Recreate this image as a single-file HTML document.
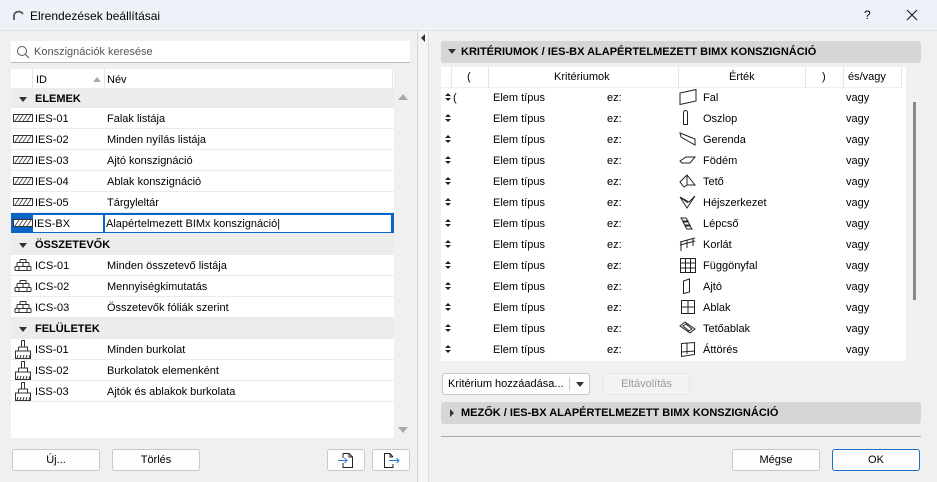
<!DOCTYPE html><html><head><meta charset="utf-8"><style>
*{box-sizing:border-box;margin:0;padding:0}
body{width:937px;height:482px;overflow:hidden;background:#f0f0f0;font-family:"Liberation Sans",sans-serif;font-size:11px;color:#000;position:relative}
.a{position:absolute}
.title{left:0;top:0;width:937px;height:31px;background:#eef2f8;border-bottom:1px solid #e0e3e8}
.row{position:absolute;left:11px;width:383px;height:21px;background:#fff;border-bottom:1px solid #ececec}
.grp{position:absolute;left:11px;width:383px;height:21px;background:#ececec;font-weight:bold}
.id{position:absolute;left:24px;top:5px}
.nm{position:absolute;left:96px;top:5px}
.btn{position:absolute;height:22px;background:#fdfdfd;border:1px solid #c8c8c8;border-radius:3px;text-align:center;line-height:20px}
.r{position:absolute;left:441px;width:465px;height:21px}
.r span{position:absolute;top:5px}
.r i{position:absolute;left:4px;top:6px;width:0;height:0;border-left:3px solid transparent;border-right:3px solid transparent;border-bottom:3px solid #222}
.r b{position:absolute;left:4px;top:11px;width:0;height:0;border-left:3px solid transparent;border-right:3px solid transparent;border-top:3px solid #222}
.ic{position:absolute;left:238px;top:2px}
</style></head><body>
<div class="a title"></div>
<svg class="a" style="left:11px;top:8px" width="14" height="14"><path d="M3 12 V7 A5 5 0 0 1 12 6" fill="none" stroke="#555" stroke-width="1.8"/></svg>
<div class="a" style="left:30px;top:9px;font-size:12px">Elrendezések beállításai</div>
<div class="a" style="left:864px;top:8px;font-size:12px">?</div>
<svg class="a" style="left:906px;top:9px" width="12" height="12"><path d="M1 1L11 11M11 1L1 11" stroke="#222" stroke-width="1.2"/></svg>
<div class="a" style="left:0;top:31px;width:418px;height:451px;border-right:1px solid #d8d8d8;background:#f0f0f0"></div>
<div class="a" style="left:419px;top:31px;width:10px;height:451px;background:#f5f5f5;border-right:1px solid #e0e0e0"></div>
<div class="a" style="left:421px;top:34px;width:0;height:0;border-top:4px solid transparent;border-bottom:4px solid transparent;border-right:4px solid #333"></div>
<div class="a" style="left:11px;top:41px;width:399px;height:22px;background:#fff;border-bottom:1px solid #bbb"></div>
<svg class="a" style="left:16px;top:45px" width="14" height="14"><circle cx="6" cy="6" r="4.5" fill="none" stroke="#555"/><path d="M9.5 9.5L13 13" stroke="#555"/></svg>
<div class="a" style="left:34px;top:46px;color:#555">Konszignációk keresése</div>
<div class="a" style="left:11px;top:69px;width:383px;height:369px;background:#fff"></div>
<div class="a" style="left:32px;top:69px;width:1px;height:19px;background:#e6e6e6"></div>
<div class="a" style="left:104px;top:69px;width:1px;height:19px;background:#e6e6e6"></div>
<div class="a" style="left:392px;top:69px;width:1px;height:19px;background:#e6e6e6"></div>
<div class="a" style="left:36px;top:74px">ID</div>
<div class="a" style="left:93px;top:77px;border-left:4px solid transparent;border-right:4px solid transparent;border-bottom:5px solid #aaa"></div>
<div class="a" style="left:107px;top:74px">Név</div>
<div class="a" style="left:394px;top:88px;width:16px;height:350px;background:#f0f0f0"></div>
<div class="a" style="left:398px;top:94px;border-left:5px solid transparent;border-right:5px solid transparent;border-bottom:6px solid #aaa"></div>
<div class="a" style="left:398px;top:427px;border-left:5px solid transparent;border-right:5px solid transparent;border-top:6px solid #aaa"></div>

<div class="grp" style="top:88px"><span class="a" style="left:8px;top:9px;border-left:4px solid transparent;border-right:4px solid transparent;border-top:5px solid #333"></span><span class="id">ELEMEK</span></div>
<div class="row" style="top:108px"><svg class="a" style="left:2px;top:6px" width="20" height="8"><rect x=".5" y=".5" width="19" height="7" fill="#fff" stroke="#333"/><path d="M2 7L6 1M6 7L10 1M10 7L14 1M14 7L18 1" stroke="#555"/></svg><span class="id">IES-01</span><span class="nm">Falak listája</span></div>
<div class="row" style="top:129px"><svg class="a" style="left:2px;top:6px" width="20" height="8"><rect x=".5" y=".5" width="19" height="7" fill="#fff" stroke="#333"/><path d="M2 7L6 1M6 7L10 1M10 7L14 1M14 7L18 1" stroke="#555"/></svg><span class="id">IES-02</span><span class="nm">Minden nyílás listája</span></div>
<div class="row" style="top:150px"><svg class="a" style="left:2px;top:6px" width="20" height="8"><rect x=".5" y=".5" width="19" height="7" fill="#fff" stroke="#333"/><path d="M2 7L6 1M6 7L10 1M10 7L14 1M14 7L18 1" stroke="#555"/></svg><span class="id">IES-03</span><span class="nm">Ajtó konszignáció</span></div>
<div class="row" style="top:171px"><svg class="a" style="left:2px;top:6px" width="20" height="8"><rect x=".5" y=".5" width="19" height="7" fill="#fff" stroke="#333"/><path d="M2 7L6 1M6 7L10 1M10 7L14 1M14 7L18 1" stroke="#555"/></svg><span class="id">IES-04</span><span class="nm">Ablak konszignáció</span></div>
<div class="row" style="top:192px"><svg class="a" style="left:2px;top:6px" width="20" height="8"><rect x=".5" y=".5" width="19" height="7" fill="#fff" stroke="#333"/><path d="M2 7L6 1M6 7L10 1M10 7L14 1M14 7L18 1" stroke="#555"/></svg><span class="id">IES-05</span><span class="nm">Tárgyleltár</span></div>
<div class="row" style="top:213px;background:#0a64c8"><svg class="a" style="left:2px;top:6px" width="20" height="8"><rect x=".5" y=".5" width="19" height="7" fill="#fff" stroke="#333"/><path d="M2 7L6 1M6 7L10 1M10 7L14 1M14 7L18 1" stroke="#555"/></svg>
<div class="a" style="left:22px;top:2px;width:70px;height:17px;background:#fff"></div><div class="a" style="left:94px;top:2px;width:286px;height:17px;background:#fff"></div>
<span class="id" style="left:23px">IES-BX</span><span class="nm" style="left:95px">Alapértelmezett BIMx konszignáció|</span></div>
<div class="grp" style="top:234px"><span class="a" style="left:8px;top:9px;border-left:4px solid transparent;border-right:4px solid transparent;border-top:5px solid #333"></span><span class="id">ÖSSZETEVŐK</span></div>
<div class="row" style="top:255px"><svg class="a" style="left:3px;top:4px" width="18" height="12" fill="none" stroke="#333"><path d="M1 11.5H17M1 7.5H17M3 3.5H15M1 7.5V11.5M17 7.5V11.5M3 3.5V7.5M15 3.5V7.5M6 .5H12V3.5M6 .5V3.5M9 3.5V7.5M5 7.5V11.5M13 7.5V11.5"/></svg><span class="id">ICS-01</span><span class="nm">Minden összetevő listája</span></div>
<div class="row" style="top:276px"><svg class="a" style="left:3px;top:4px" width="18" height="12" fill="none" stroke="#333"><path d="M1 11.5H17M1 7.5H17M3 3.5H15M1 7.5V11.5M17 7.5V11.5M3 3.5V7.5M15 3.5V7.5M6 .5H12V3.5M6 .5V3.5M9 3.5V7.5M5 7.5V11.5M13 7.5V11.5"/></svg><span class="id">ICS-02</span><span class="nm">Mennyiségkimutatás</span></div>
<div class="row" style="top:297px"><svg class="a" style="left:3px;top:4px" width="18" height="12" fill="none" stroke="#333"><path d="M1 11.5H17M1 7.5H17M3 3.5H15M1 7.5V11.5M17 7.5V11.5M3 3.5V7.5M15 3.5V7.5M6 .5H12V3.5M6 .5V3.5M9 3.5V7.5M5 7.5V11.5M13 7.5V11.5"/></svg><span class="id">ICS-03</span><span class="nm">Összetevők fóliák szerint</span></div>
<div class="grp" style="top:318px"><span class="a" style="left:8px;top:9px;border-left:4px solid transparent;border-right:4px solid transparent;border-top:5px solid #333"></span><span class="id">FELÜLETEK</span></div>
<div class="row" style="top:339px"><svg class="a" style="left:4px;top:1px" width="16" height="19" fill="none" stroke="#333"><path d="M6.5 .5H9.5V7M6.5 .5V7M3.5 7H12.5V11M3.5 7V11M.5 11H15.5V18.5H.5Z"/><path d="M2 18L3 15M5 18L6 15M8 18L9 15M11 18L12 15M14 18L15 15"/></svg><span class="id">ISS-01</span><span class="nm">Minden burkolat</span></div>
<div class="row" style="top:360px"><svg class="a" style="left:4px;top:1px" width="16" height="19" fill="none" stroke="#333"><path d="M6.5 .5H9.5V7M6.5 .5V7M3.5 7H12.5V11M3.5 7V11M.5 11H15.5V18.5H.5Z"/><path d="M2 18L3 15M5 18L6 15M8 18L9 15M11 18L12 15M14 18L15 15"/></svg><span class="id">ISS-02</span><span class="nm">Burkolatok elemenként</span></div>
<div class="row" style="top:381px"><svg class="a" style="left:4px;top:1px" width="16" height="19" fill="none" stroke="#333"><path d="M6.5 .5H9.5V7M6.5 .5V7M3.5 7H12.5V11M3.5 7V11M.5 11H15.5V18.5H.5Z"/><path d="M2 18L3 15M5 18L6 15M8 18L9 15M11 18L12 15M14 18L15 15"/></svg><span class="id">ISS-03</span><span class="nm">Ajtók és ablakok burkolata</span></div>

<div class="btn" style="left:12px;top:449px;width:88px">Új...</div>
<div class="btn" style="left:112px;top:449px;width:88px">Törlés</div>
<div class="btn" style="left:327px;top:449px;width:38px"><svg width="20" height="18" style="margin-top:1px"><path d="M7 2.5H13L16.5 6V16.5H7V12M7 7V2.5M13 2.5V6H16.5" fill="none" stroke="#222"/><path d="M2 9.5H11M8.5 7L11 9.5 8.5 12" fill="none" stroke="#2a7fd4"/></svg></div>
<div class="btn" style="left:372px;top:449px;width:38px"><svg width="20" height="18" style="margin-top:1px"><path d="M12 6L9 2.5H3.5V16.5H12V13M9 2.5V6H12" fill="none" stroke="#222"/><path d="M8 9.5H18M15.5 7L18 9.5 15.5 12" fill="none" stroke="#2a7fd4"/></svg></div>

<div class="a" style="left:441px;top:41px;width:480px;height:22px;background:#d6d6d6;border-radius:3px"></div>
<div class="a" style="left:448px;top:49px;border-left:4px solid transparent;border-right:4px solid transparent;border-top:5px solid #333"></div>
<div class="a" style="left:461px;top:46px;font-weight:bold">KRITÉRIUMOK / IES-BX ALAPÉRTELMEZETT BIMX KONSZIGNÁCIÓ</div>
<div class="a" style="left:441px;top:67px;width:465px;height:294px;background:#fff"></div>
<div class="a" style="left:441px;top:67px;width:460px;height:21px;border-bottom:1px solid #eee"></div>
<div class="a" style="left:451px;top:67px;width:1px;height:21px;background:#e6e6e6"></div>
<div class="a" style="left:488px;top:67px;width:1px;height:21px;background:#e6e6e6"></div>
<div class="a" style="left:678px;top:67px;width:1px;height:21px;background:#e6e6e6"></div>
<div class="a" style="left:805px;top:67px;width:1px;height:21px;background:#e6e6e6"></div>
<div class="a" style="left:843px;top:67px;width:1px;height:21px;background:#e6e6e6"></div>
<div class="a" style="left:901px;top:67px;width:1px;height:21px;background:#e6e6e6"></div>
<div class="a" style="left:467px;top:71px">(</div>
<div class="a" style="left:554px;top:71px">Kritériumok</div>
<div class="a" style="left:729px;top:71px">Érték</div>
<div class="a" style="left:822px;top:71px">)</div>
<div class="a" style="left:848px;top:71px">és/vagy</div>
<div class="a" style="left:913px;top:102px;width:3px;height:198px;background:#888"></div>

<div class="r" style="top:87px"><i></i><b></b><span style="left:12px">(</span><span style="left:52px">Elem típus</span><span style="left:166px">ez:</span><svg class="ic" width="18" height="16" fill="none" stroke="#222"><path d="M1 15.5V4L17 .5V12Z"/></svg><span style="left:262px">Fal</span><span style="left:405px">vagy</span></div>
<div class="r" style="top:108px"><i></i><b></b><span style="left:52px">Elem típus</span><span style="left:166px">ez:</span><svg class="ic" width="18" height="16" fill="none" stroke="#222"><path d="M4.5 2.5V14.5H8.5V2.5A2 2 0 0 0 4.5 2.5"/></svg><span style="left:262px">Oszlop</span><span style="left:405px">vagy</span></div>
<div class="r" style="top:129px"><i></i><b></b><span style="left:52px">Elem típus</span><span style="left:166px">ez:</span><svg class="ic" width="18" height="16" fill="none" stroke="#222"><path d="M1 2L16 8V14L2 6Z"/></svg><span style="left:262px">Gerenda</span><span style="left:405px">vagy</span></div>
<div class="r" style="top:150px"><i></i><b></b><span style="left:52px">Elem típus</span><span style="left:166px">ez:</span><svg class="ic" width="18" height="16" fill="none" stroke="#222"><path d="M1 9L7 5H16L11 11H3Z"/></svg><span style="left:262px">Födém</span><span style="left:405px">vagy</span></div>
<div class="r" style="top:171px"><i></i><b></b><span style="left:52px">Elem típus</span><span style="left:166px">ez:</span><svg class="ic" width="18" height="16" fill="none" stroke="#222"><path d="M1 9L8 2L16 12H8L5 14ZM8 2V12"/></svg><span style="left:262px">Tető</span><span style="left:405px">vagy</span></div>
<div class="r" style="top:192px"><i></i><b></b><span style="left:52px">Elem típus</span><span style="left:166px">ez:</span><svg class="ic" width="18" height="16" fill="none" stroke="#222"><path d="M1 3L8 14L16 2L10 8ZM1 3L9 9"/></svg><span style="left:262px">Héjszerkezet</span><span style="left:405px">vagy</span></div>
<div class="r" style="top:213px"><i></i><b></b><span style="left:52px">Elem típus</span><span style="left:166px">ez:</span><svg class="ic" width="18" height="16" fill="none" stroke="#222"><path d="M2 3H7L9 6H4ZM4 7H9L11 10H6ZM6 11H11L13 14H8Z"/></svg><span style="left:262px">Lépcső</span><span style="left:405px">vagy</span></div>
<div class="r" style="top:234px"><i></i><b></b><span style="left:52px">Elem típus</span><span style="left:166px">ez:</span><svg class="ic" width="18" height="16" fill="none" stroke="#222"><path d="M1 6L16 2M1 9L16 5M2 15V6M8 12V4M14 10V2"/></svg><span style="left:262px">Korlát</span><span style="left:405px">vagy</span></div>
<div class="r" style="top:255px"><i></i><b></b><span style="left:52px">Elem típus</span><span style="left:166px">ez:</span><svg class="ic" width="18" height="16" fill="none" stroke="#222"><path d="M1.5 1.5H16.5V15.5H1.5ZM1.5 6H16.5M1.5 11H16.5M6.5 1.5V15.5M11.5 1.5V15.5"/></svg><span style="left:262px">Függönyfal</span><span style="left:405px">vagy</span></div>
<div class="r" style="top:276px"><i></i><b></b><span style="left:52px">Elem típus</span><span style="left:166px">ez:</span><svg class="ic" width="18" height="16" fill="none" stroke="#222"><path d="M4.5 3L10.5 1V14L4.5 15.5Z"/></svg><span style="left:262px">Ajtó</span><span style="left:405px">vagy</span></div>
<div class="r" style="top:297px"><i></i><b></b><span style="left:52px">Elem típus</span><span style="left:166px">ez:</span><svg class="ic" width="18" height="16" fill="none" stroke="#222"><path d="M2.5 1.5H15.5V14.5H2.5ZM2.5 8H15.5M9 1.5V14.5"/></svg><span style="left:262px">Ablak</span><span style="left:405px">vagy</span></div>
<div class="r" style="top:318px"><i></i><b></b><span style="left:52px">Elem típus</span><span style="left:166px">ez:</span><svg class="ic" width="18" height="16" fill="none" stroke="#222"><path d="M1 6L6 2L16 9L11 13ZM4 6L7 4L13 9L10 11Z"/></svg><span style="left:262px">Tetőablak</span><span style="left:405px">vagy</span></div>
<div class="r" style="top:339px"><i></i><b></b><span style="left:52px">Elem típus</span><span style="left:166px">ez:</span><svg class="ic" width="18" height="16" fill="none" stroke="#222"><path d="M2.5 2.5L15.5 1.5V13.5L2.5 15.5ZM2.5 11L15.5 10M8 2V13"/></svg><span style="left:262px">Áttörés</span><span style="left:405px">vagy</span></div>

<div class="btn" style="left:442px;top:373px;width:148px;text-align:left;padding-left:5px">Kritérium hozzáadása...<span class="a" style="left:126px;top:3px;width:1px;height:14px;background:#ccc"></span><span class="a" style="left:133px;top:8px;border-left:4px solid transparent;border-right:4px solid transparent;border-top:5px solid #333"></span></div>
<div class="btn" style="left:603px;top:373px;width:87px;background:#f3f3f3;border-color:#e6e6e6;color:#9a9a9a">Eltávolítás</div>
<div class="a" style="left:441px;top:402px;width:480px;height:22px;background:#d6d6d6;border-radius:3px"></div>
<div class="a" style="left:450px;top:409px;border-top:4px solid transparent;border-bottom:4px solid transparent;border-left:4px solid #333"></div>
<div class="a" style="left:461px;top:407px;font-weight:bold">MEZŐK / IES-BX ALAPÉRTELMEZETT BIMX KONSZIGNÁCIÓ</div>
<div class="a" style="left:441px;top:436px;width:480px;height:1px;background:#aaa"></div>
<div class="btn" style="left:732px;top:449px;width:88px">Mégse</div>
<div class="btn" style="left:832px;top:449px;width:88px;border-color:#1f6fc8">OK</div>
</body></html>
